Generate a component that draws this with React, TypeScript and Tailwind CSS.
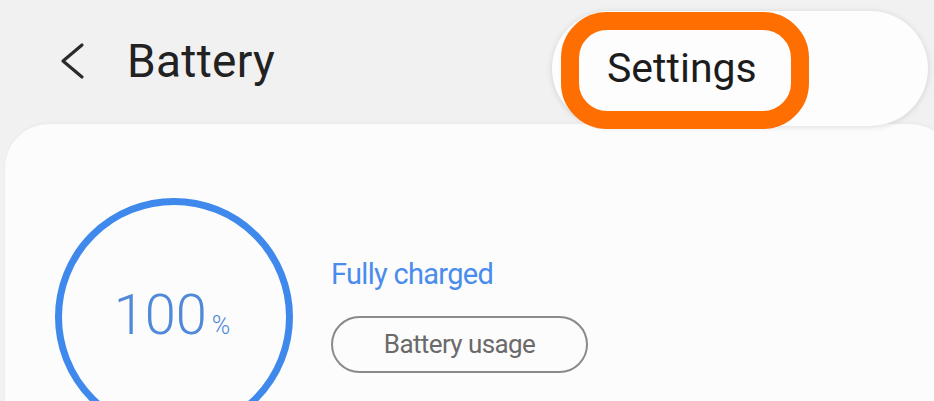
export default function App() {
  return (
    <div className="relative w-[934px] h-[401px] overflow-hidden bg-[#f1f1f1] font-['Roboto','Liberation_Sans',sans-serif]">
      {/* Header */}
      <div className="flex items-center h-[124px] pl-[58px] pb-[2px]">
        <svg width="28" height="38" viewBox="0 0 28 38" className="mr-[41px]">
          <polyline points="24,3 5,19 24,35" fill="none" stroke="#2b2b2b" strokeWidth="3.2" strokeLinecap="round" strokeLinejoin="round" />
        </svg>
        <h1 className="text-[46px] leading-none text-[#222] tracking-[0.3px]">Battery</h1>
      </div>

      {/* Card */}
      <div className="ml-[5px] -mr-[20px] h-[300px] rounded-t-[44px] bg-[#fcfcfc] shadow-[0_-1px_3px_rgba(0,0,0,0.04)] flex items-start">
        <div className="ml-[50px] mt-[74px] w-[238px] h-[238px] shrink-0 rounded-full border-[7px] border-[#3f88ec] flex items-center justify-center">
          <div className="flex items-baseline -mt-[2px] -ml-[4px]">
            <span className="text-[56px] font-light leading-none text-[#4f89d8]">100</span>
            <span className="ml-[5px] text-[25px] font-light text-[#4f89d8]">%</span>
          </div>
        </div>
        <div className="ml-[38px] mt-[136px] flex flex-col items-start">
          <span className="text-[29px] leading-none text-[#4a8cec] tracking-[-0.7px]">Fully charged</span>
          <button className="mt-[27px] w-[257px] h-[57px] rounded-full border-[2px] border-[#8a8a8a] flex items-center justify-center text-[26px] text-[#6a6a6a] tracking-[-0.6px]">
            Battery usage
          </button>
        </div>
      </div>

      {/* Floating pill over the header */}
      <div className="absolute left-[552px] top-[11px] w-[376px] h-[115px] rounded-full bg-[#fdfdfd] shadow-[0_1px_6px_rgba(0,0,0,0.13)] flex items-center pl-[55px]">
        <span className="text-[41px] leading-none text-[#1c1c1c] -mt-[1px]">Settings</span>
      </div>

      {/* Highlight annotation */}
      <div className="absolute left-[561px] top-[12px] w-[248px] h-[117px] rounded-[46px] border-[18px] border-[#ff6e00]" />
    </div>
  );
}
